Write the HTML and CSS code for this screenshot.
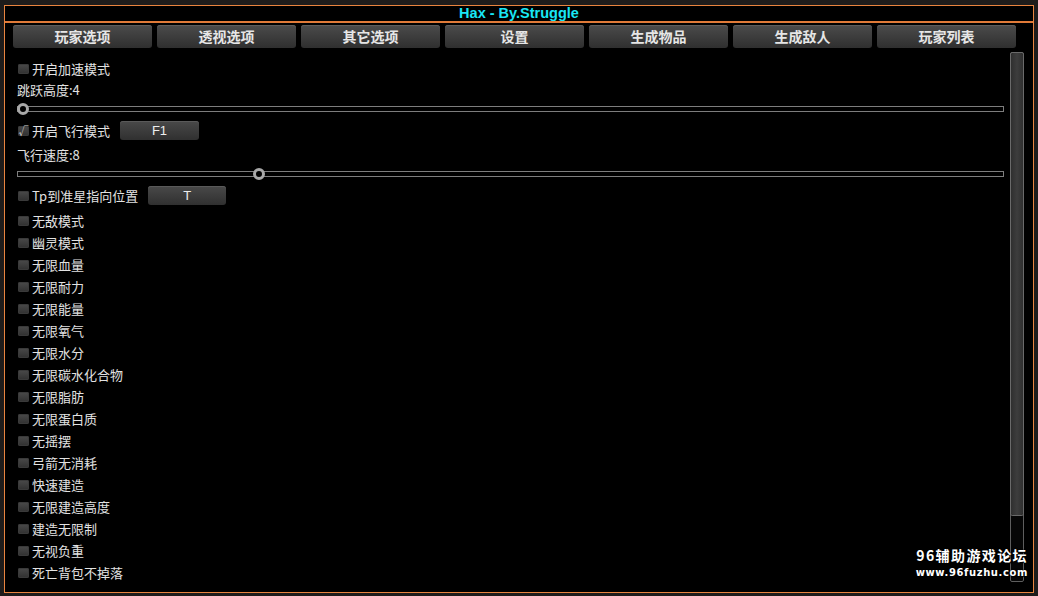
FILE: index.html
```html
<!DOCTYPE html>
<html lang="zh-CN">
<head>
    <meta charset="UTF-8">
    <meta name="viewport" content="width=device-width, initial-scale=1.0">
    <title>Hax - By.Struggle</title>
    <link rel="stylesheet" href="styles.css">
</head>
<body>

<div class="frame">
    <div class="title">Hax - By.Struggle</div>

    <div class="tabs">
        <div class="tab">玩家选项</div>
        <div class="tab">透视选项</div>
        <div class="tab">其它选项</div>
        <div class="tab">设置</div>
        <div class="tab">生成物品</div>
        <div class="tab">生成敌人</div>
        <div class="tab">玩家列表</div>
    </div>

    <div class="main">
        <div class="options">
            <div class="opt"><span class="box"></span>开启加速模式</div>
            <div class="caption">跳跃高度:4</div>
            <div class="slider"><span class="knob" style="left: 0%"></span></div>

            <div class="opt hotkey"><span class="box checked">√</span>开启飞行模式<span class="key">F1</span></div>
            <div class="caption">飞行速度:8</div>
            <div class="slider"><span class="knob" style="left: 23.9%"></span></div>

            <div class="opt hotkey"><span class="box"></span>Tp到准星指向位置<span class="key wide">T</span></div>

            <div class="opt"><span class="box"></span>无敌模式</div>
            <div class="opt"><span class="box"></span>幽灵模式</div>
            <div class="opt"><span class="box"></span>无限血量</div>
            <div class="opt"><span class="box"></span>无限耐力</div>
            <div class="opt"><span class="box"></span>无限能量</div>
            <div class="opt"><span class="box"></span>无限氧气</div>
            <div class="opt"><span class="box"></span>无限水分</div>
            <div class="opt"><span class="box"></span>无限碳水化合物</div>
            <div class="opt"><span class="box"></span>无限脂肪</div>
            <div class="opt"><span class="box"></span>无限蛋白质</div>
            <div class="opt"><span class="box"></span>无摇摆</div>
            <div class="opt"><span class="box"></span>弓箭无消耗</div>
            <div class="opt"><span class="box"></span>快速建造</div>
            <div class="opt"><span class="box"></span>无限建造高度</div>
            <div class="opt"><span class="box"></span>建造无限制</div>
            <div class="opt"><span class="box"></span>无视负重</div>
            <div class="opt"><span class="box"></span>死亡背包不掉落</div>
        </div>

        <div class="scrollbar"><div class="thumb"></div></div>
    </div>

    <!-- 论坛水印 -->
    <div class="watermark">
        <div class="wm-name">96辅助游戏论坛</div>
        <div class="wm-url">www.96fuzhu.com</div>
    </div>
</div>

</body>
</html>
```

FILE: styles.css
```css
html, body {
    height: 100%;
}
body {
    margin: 0;
    background: #1e1c1b;
    font-family: 'Noto Sans CJK SC', 'Liberation Sans', sans-serif;
    overflow: hidden;
}
.frame {
    position: relative;
    margin: 5px 4px 0 4px;
    height: 586px;
    border: 1px solid #e9843f;
    background: #000;
    box-sizing: content-box;
}
.title {
    height: 15px;
    line-height: 15px;
    border-bottom: 2px solid #e07a38;
    text-align: center;
    color: #19e6f5;
    font-family: 'Liberation Sans', sans-serif;
    font-weight: bold;
    font-size: 14.5px;
}
.tabs {
    display: grid;
    grid-template-columns: repeat(7, 139px);
    gap: 5px;
    padding: 2px 0 0 8px;
}
.tab {
    height: 23px;
    line-height: 23px;
    text-align: center;
    color: #e6e6e6;
    font-size: 14px;
    font-weight: bold;
    border-radius: 3px;
    background: linear-gradient(#4b4b4b, #2f2f2f);
    box-shadow: inset 0 1px 0 #5c5c5c;
}
.main {
    display: flex;
    gap: 6px;
    padding: 0 9px 0 12px;
}
.options {
    flex: 1;
    padding-top: 9px;
    color: #e2e2e2;
    font-size: 13px;
}
.opt {
    display: flex;
    align-items: center;
    height: 22px;
}
.opt.hotkey {
    margin: 2px 0 3px;
}
.box {
    width: 11px;
    height: 10px;
    margin: 1px 3px 0 1px;
    border-radius: 2px;
    background: linear-gradient(#4a4a4a, #303030);
    box-shadow: inset 0 0 0 1px #3a3a3a;
    color: #d8d8d8;
    font-size: 10px;
    line-height: 10px;
    text-align: center;
}
.key {
    width: 79px;
    height: 19px;
    line-height: 19px;
    margin-left: 10px;
    text-align: center;
    color: #eee;
    font-family: 'Liberation Sans', sans-serif;
    font-size: 13px;
    border-radius: 3px;
    background: linear-gradient(#494949, #303030);
    box-shadow: inset 0 1px 0 #5a5a5a;
}
.key.wide {
    width: 78px;
}
.caption {
    height: 22px;
    line-height: 22px;
}
.slider {
    position: relative;
    height: 16px;
}
.slider::before {
    content: '';
    position: absolute;
    left: 0;
    right: 0;
    top: 5px;
    height: 4px;
    border: 1px solid #7d7d7d;
}
.knob {
    position: absolute;
    top: 2px;
    width: 6px;
    height: 6px;
    border: 3px solid #a9a9a9;
    border-radius: 50%;
    background: #000;
}
.scrollbar {
    position: relative;
    width: 12px;
    height: 528px;
    margin-top: 4px;
    border: 1px solid #5e5e5e;
    border-radius: 2px;
    background: #060606;
}
.thumb {
    height: 462px;
    border-radius: 2px;
    background: linear-gradient(90deg, #2f2f2f, #3d3d3d 50%, #2f2f2f);
    box-shadow: 0 0 0 1px #6a6a6a;
}
.watermark {
    position: absolute;
    right: 5px;
    bottom: 13px;
    color: #fff;
    text-align: right;
    font-weight: bold;
    text-shadow: 0 0 2px #000, 1px 1px 1px #000;
}
.wm-name {
    font-size: 14px;
    line-height: 16px;
    letter-spacing: 1.4px;
}
.wm-url {
    margin-top: 4px;
    font-family: 'DejaVu Sans', sans-serif;
    font-size: 10px;
    line-height: 12px;
    letter-spacing: 0.6px;
}
```
